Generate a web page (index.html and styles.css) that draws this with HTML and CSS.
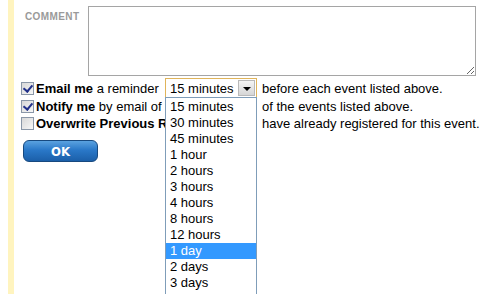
FILE: index.html
```html
<!DOCTYPE html>
<html lang="en">
  <head>
    <meta charset="UTF-8" />
    <meta name="viewport" content="width=device-width, initial-scale=1.0" />
    <title>Event reminders</title>
    <link rel="stylesheet" href="styles.css">
  </head>
  <body>
    <div class="page">
      <div class="comment-row">
        <label class="comment-label" for="comment">COMMENT</label>
        <textarea id="comment" class="comment-box"></textarea>
      </div>

      <div class="option first">
        <span class="check checked"></span>
        <span class="lead"><b>Email me</b> a reminder</span>
        <div class="select">
          <span class="select-value">15 minutes</span>
          <span class="select-arrow"></span>
          <ul class="dropdown">
            <li>15 minutes</li>
            <li>30 minutes</li>
            <li>45 minutes</li>
            <li>1 hour</li>
            <li>2 hours</li>
            <li>3 hours</li>
            <li>4 hours</li>
            <li>8 hours</li>
            <li>12 hours</li>
            <li class="active">1 day</li>
            <li>2 days</li>
            <li>3 days</li>
          </ul>
        </div>
        <span class="trail">before each event listed above.</span>
      </div>

      <div class="option">
        <span class="check checked"></span>
        <span class="lead wide"><b>Notify me</b> by email of</span>
        <span class="trail">of the events listed above.</span>
      </div>

      <div class="option">
        <span class="check"></span>
        <span class="lead wide"><b>Overwrite Previous Registration</b></span>
        <span class="trail">have already registered for this event.</span>
      </div>

      <button class="ok-btn">OK</button>
    </div>
  </body>
</html>
```

FILE: styles.css
```css
* {
  margin: 0;
  padding: 0;
  box-sizing: border-box;
}

body {
  background: #fff;
  font-family: 'Liberation Sans', Arial, sans-serif;
  font-size: 13px;
  color: #000;
}

.page {
  margin-left: 8px;
  border-left: 6px solid #fff4bf;
  min-height: 294px;
  padding: 6px 0 0 7px;
}

.comment-row {
  display: flex;
}

.comment-label {
  width: 67px;
  padding: 5px 0 0 4px;
  font-size: 10px;
  font-weight: bold;
  letter-spacing: 0.4px;
  color: #9a9a9a;
}

.comment-box {
  width: 388px;
  height: 70px;
  border: 1px solid #a5a5a5;
  font-family: inherit;
}

.option {
  display: flex;
  align-items: center;
  height: 17px;
  white-space: nowrap;
}

.option.first {
  margin-top: 2px;
  height: 20px;
}

.check {
  width: 13px;
  height: 13px;
  margin-right: 2px;
  border: 1px solid #8a97a8;
  background: linear-gradient(135deg, #d8d8d8, #f7f7f7);
  position: relative;
}

.check.checked::after {
  content: '';
  position: absolute;
  left: 3px;
  top: 0px;
  width: 4px;
  height: 7px;
  border-right: 2px solid #22318a;
  border-bottom: 2px solid #22318a;
  transform: rotate(40deg);
}

.lead {
  width: 129px;
}

.lead.wide {
  width: 221px;
  margin-right: 5px;
  overflow: hidden;
}

.select {
  position: relative;
  width: 92px;
  height: 20px;
  margin-right: 5px;
  border: 1px solid #e0b45a;
  display: flex;
  align-items: center;
  padding-left: 4px;
}

.select-value {
  flex: 1;
}

.select-arrow {
  width: 17px;
  height: 16px;
  margin-right: 1px;
  border: 1px solid #b9b9b9;
  background: linear-gradient(#f4f4f4, #d6d6d6);
  position: relative;
}

.select-arrow::after {
  content: '';
  position: absolute;
  left: 4px;
  top: 6px;
  border-left: 4px solid transparent;
  border-right: 4px solid transparent;
  border-top: 4px solid #000;
}

.dropdown {
  position: absolute;
  top: 18px;
  left: -1px;
  width: 92px;
  height: 210px;
  padding-top: 1px;
  list-style: none;
  background: #fff;
  border: 1px solid #7f9db9;
  z-index: 2;
}

.dropdown li {
  height: 16px;
  line-height: 16px;
  padding-left: 4px;
}

.dropdown li.active {
  background: #3399ff;
  color: #fff;
}

.ok-btn {
  margin: 8px 0 0 2px;
  width: 75px;
  height: 22px;
  border: 1px solid #17497f;
  border-radius: 6px;
  background: linear-gradient(#5aa2e0, #2a78c8 45%, #1b5fa9);
  color: #fff;
  font-family: 'DejaVu Sans Condensed', 'DejaVu Sans', sans-serif;
  font-weight: bold;
  font-size: 13px;
  cursor: pointer;
}
```
